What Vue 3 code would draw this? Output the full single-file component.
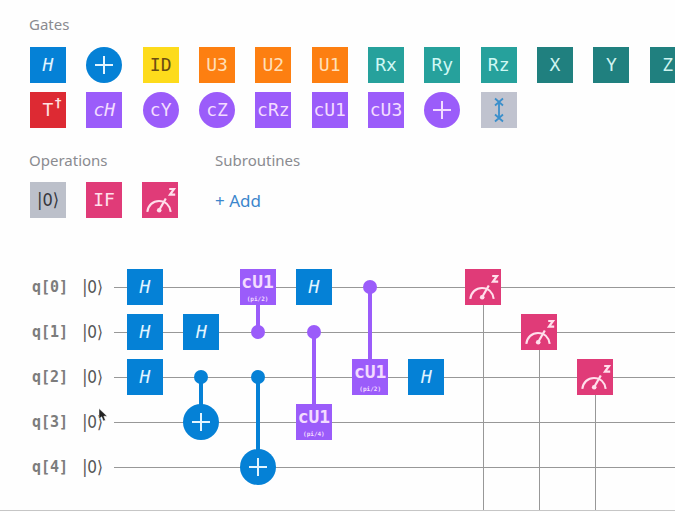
<script setup>
import { h } from 'vue'

const palette = [
  { label: 'H', tone: 'blue', italic: true },
  { icon: 'plus', name: 'cX', tone: 'blue', round: true },
  { label: 'ID', tone: 'yellow' },
  { label: 'U3', tone: 'orange' },
  { label: 'U2', tone: 'orange' },
  { label: 'U1', tone: 'orange' },
  { label: 'Rx', tone: 'teal' },
  { label: 'Ry', tone: 'teal' },
  { label: 'Rz', tone: 'teal' },
  { label: 'X', tone: 'pine' },
  { label: 'Y', tone: 'pine' },
  { label: 'Z', tone: 'pine' },
  { label: 'T', sup: '†', tone: 'red' },
  { label: 'cH', tone: 'purple', italic: true },
  { label: 'cY', tone: 'purple', round: true },
  { label: 'cZ', tone: 'purple', round: true },
  { label: 'cRz', tone: 'purple' },
  { label: 'cU1', tone: 'purple' },
  { label: 'cU3', tone: 'purple' },
  { icon: 'plus', name: 'ccX', tone: 'purple', round: true },
  { icon: 'swap', name: 'Swap', tone: 'grey' },
]

const operations = [
  { label: '|0⟩', tone: 'grey', ket: true },
  { label: 'IF', tone: 'pink' },
  { icon: 'meter', name: 'Measure', tone: 'pink' },
]

const qubits = [0, 1, 2, 3, 4]

// row and col count from zero, on the wires and the time steps
const gates = [
  { row: 0, col: 0, label: 'H', tone: 'blue', italic: true },
  { row: 1, col: 0, label: 'H', tone: 'blue', italic: true },
  { row: 2, col: 0, label: 'H', tone: 'blue', italic: true },
  { row: 1, col: 1, label: 'H', tone: 'blue', italic: true },
  { row: 3, col: 1, icon: 'plus', name: 'cX', tone: 'blue', round: true },
  { row: 0, col: 2, label: 'cU1', param: '(pi/2)', tone: 'purple' },
  { row: 4, col: 2, icon: 'plus', name: 'cX', tone: 'blue', round: true },
  { row: 0, col: 3, label: 'H', tone: 'blue', italic: true },
  { row: 3, col: 3, label: 'cU1', param: '(pi/4)', tone: 'purple' },
  { row: 2, col: 4, label: 'cU1', param: '(pi/2)', tone: 'purple' },
  { row: 2, col: 5, label: 'H', tone: 'blue', italic: true },
  { row: 0, col: 6, icon: 'meter', name: 'Measure', tone: 'pink' },
  { row: 1, col: 7, icon: 'meter', name: 'Measure', tone: 'pink' },
  { row: 2, col: 8, icon: 'meter', name: 'Measure', tone: 'pink' },
]

const links = [
  { col: 1, from: 2, to: 3, dot: 2, tone: 'blue' },
  { col: 2, from: 0, to: 1, dot: 1, tone: 'purple' },
  { col: 2, from: 2, to: 4, dot: 2, tone: 'blue' },
  { col: 3, from: 1, to: 3, dot: 1, tone: 'purple' },
  { col: 4, from: 0, to: 2, dot: 0, tone: 'purple' },
]

const measures = gates.filter((g) => g.icon === 'meter')

const cell = (row, col) => ({ gridRow: row + 1, gridColumn: col + 3 })
const span = (from, to, col) => ({ gridRow: `${from + 1} / ${to + 2}`, gridColumn: col + 3 })

const line = (d, width) =>
  h('path', { d, fill: 'none', stroke: 'currentColor', 'stroke-width': width })

const glyphs = {
  plus: () => [line('M9 18H27M18 9V27', 2)],
  swap: () => [
    line('M18 10V26', 1.8),
    line('M14 6.5L22 13.5M22 6.5L14 13.5M14 22.5L22 29.5M22 22.5L14 29.5', 1.8),
  ],
  meter: () => [
    line('M5.3 29.8C6.2 23 11 19 17 19C23 19 27.6 23 28.7 29.8', 2.1),
    line('M17.2 28L23.8 16.5', 2.2),
    h('circle', { cx: 17.2, cy: 28.2, r: 2.3, fill: 'currentColor' }),
    line('M27.2 7H32L28 12.6H33.2', 2.2),
  ],
}

const Glyph = (props) =>
  h('svg', { viewBox: '0 0 36 36', width: 36, height: 36, 'aria-hidden': 'true' }, glyphs[props.name]())
Glyph.props = ['name']

const Gate = ({ gate }) =>
  h(
    'button',
    {
      type: 'button',
      class: ['gate', gate.tone, { round: gate.round, italic: gate.italic, ket: gate.ket, param: gate.param }],
      'aria-label': gate.name,
    },
    gate.icon
      ? [h(Glyph, { name: gate.icon })]
      : [
          h('span', gate.label),
          gate.sup ? h('sup', gate.sup) : null,
          gate.param ? h('small', gate.param) : null,
        ],
  )
Gate.props = ['gate']
</script>

<template>
  <main class="composer">
    <section class="gates">
      <h2>Gates</h2>
      <div class="palette">
        <Gate v-for="(g, i) in palette" :key="i" :gate="g" />
      </div>
    </section>

    <div class="extras">
      <section>
        <h2>Operations</h2>
        <div class="operations">
          <Gate v-for="(g, i) in operations" :key="i" :gate="g" />
        </div>
      </section>
      <section>
        <h2>Subroutines</h2>
        <button type="button" class="add">+ Add</button>
      </section>
    </div>

    <section class="circuit" aria-label="Circuit">
      <template v-for="q in qubits" :key="q">
        <div class="qubit" :style="{ gridRow: q + 1 }">
          <span class="name">q[{{ q }}]</span>
          <span class="state">|0⟩</span>
        </div>
        <div class="wire" :style="{ gridRow: q + 1 }"></div>
      </template>
      <div
        v-for="m in measures"
        :key="'m' + m.col"
        class="drop"
        :style="{ gridRow: `${m.row + 1} / 7`, gridColumn: m.col + 3 }"
      ></div>
      <template v-for="(l, i) in links" :key="'l' + i">
        <div class="link" :class="l.tone" :style="span(l.from, l.to, l.col)"></div>
        <div class="dot" :class="l.tone" :style="cell(l.dot, l.col)"></div>
      </template>
      <Gate v-for="(g, i) in gates" :key="'g' + i" :gate="g" :style="cell(g.row, g.col)" />
      <svg class="pointer" viewBox="0 0 10 14" width="10" height="14" aria-hidden="true">
        <path d="M1 0.5V11L3.6 8.8L5.4 13L7.4 12.2L5.8 8.2H9.2Z" fill="#222" stroke="#fff" stroke-width="0.5" />
      </svg>
    </section>
  </main>
</template>

<style>
body {
  margin: 0;
  background: #fefefe;
}
</style>

<style scoped>
.composer {
  overflow: hidden;
  padding-top: 14px;
  font-family: "Noto Sans", sans-serif;
}

h2 {
  margin: 0;
  font-size: 15px;
  line-height: 20px;
  font-weight: 400;
  color: #8a8b90;
}

.gates {
  padding-left: 29px;
}

.palette {
  display: grid;
  grid-template-columns: repeat(12, 1fr);
  gap: 9px 0;
  margin: 13px -31px 0 1px;
}

.composer :deep(.gate) {
  position: relative;
  display: flex;
  flex-direction: column;
  align-items: center;
  justify-content: center;
  width: 36px;
  height: 36px;
  padding: 0;
  border: 0;
  font-family: "DejaVu Sans Mono", monospace;
  font-size: 18px;
  line-height: 20px;
  white-space: nowrap;
  color: #fff;
  background: var(--tone);
}

.composer :deep(.round) {
  border-radius: 50%;
}

.composer :deep(.italic) {
  font-style: italic;
}

.composer :deep(svg) {
  display: block;
}

.composer :deep(sup) {
  position: absolute;
  top: 4px;
  right: 4px;
  font-size: 13px;
  line-height: 14px;
  font-weight: 700;
}

.composer :deep(small) {
  font-size: 6px;
  line-height: 8px;
}

.composer :deep(.param) {
  justify-content: flex-end;
  gap: 3px;
  padding-bottom: 2px;
  font-weight: 700;
}

.composer :deep(.blue) {
  --tone: #0581d6;
  color: #e3f5ff;
}

.composer :deep(.yellow) {
  --tone: #fddb1c;
  color: #6b4d12;
}

.composer :deep(.orange) {
  --tone: #fd7f11;
  color: #ffdfb8;
}

.composer :deep(.teal) {
  --tone: #26a19c;
  color: #cff8f4;
}

.composer :deep(.pine) {
  --tone: #20807f;
  color: #cff4f0;
}

.composer :deep(.red) {
  --tone: #dd2a33;
  color: #ffe2e2;
}

.composer :deep(.purple) {
  --tone: #9b5cfa;
  color: #f3dcff;
}

.composer :deep(.grey) {
  --tone: #c0c3cf;
  color: #3a8fcb;
}

.composer :deep(.pink) {
  --tone: #e03b78;
  color: #ffe0ec;
}

.composer :deep(.ket) {
  --tone: #bcc0ca;
  font-family: "DejaVu Sans Condensed", "DejaVu Sans", sans-serif;
  color: #35373d;
}

.extras {
  display: flex;
  gap: 37px;
  margin-top: 22px;
  padding-left: 29px;
}

.operations {
  display: flex;
  gap: 20px;
  margin: 12px 0 0 1px;
}

.add {
  margin-top: 19px;
  padding: 0;
  border: 0;
  background: none;
  font-family: inherit;
  font-size: 17px;
  line-height: 24px;
  color: #3c86cc;
}

.circuit {
  position: relative;
  display: grid;
  grid-template-columns: 82px 13px repeat(10, 1fr);
  grid-template-rows: repeat(5, 36px) 16px;
  gap: 9px 0;
  margin: 51px -15px 0 0;
  padding-left: 32px;
  border-bottom: 1px solid #c6c6c6;
}

.qubit {
  grid-column: 1;
  display: flex;
  align-items: center;
  gap: 14px;
  font-size: 15px;
  line-height: 20px;
}

.name {
  font-family: "DejaVu Sans Mono", monospace;
  font-weight: 700;
  color: #7c7c7c;
}

.state {
  font-family: "DejaVu Sans Condensed", "DejaVu Sans", sans-serif;
  font-size: 17px;
  color: #555;
}

.wire {
  grid-column: 2 / -1;
  align-self: center;
  height: 1px;
  background: #989898;
}

.drop {
  width: 1px;
  margin: 18px 0 0 18px;
  background: #989898;
}

.link {
  width: 4px;
  margin: 18px 0 18px 16px;
  background: var(--tone);
}

.dot {
  align-self: center;
  width: 14px;
  height: 14px;
  margin-left: 11px;
  border-radius: 50%;
  background: var(--tone);
}

.pointer {
  position: absolute;
  top: 139px;
  left: 98px;
}
</style>
